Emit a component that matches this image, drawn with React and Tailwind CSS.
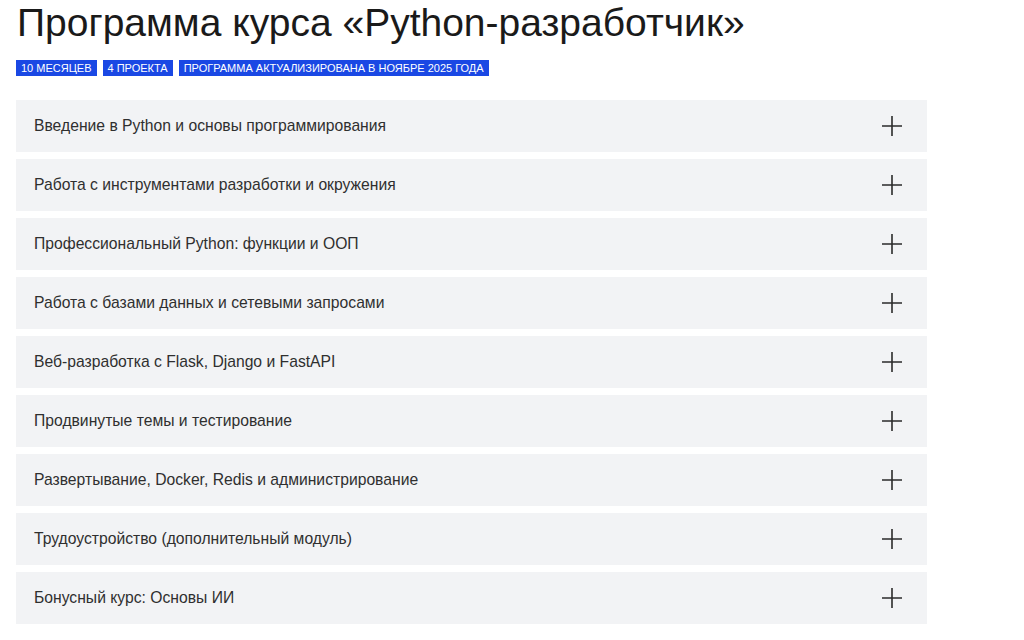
import React from "react";

const modules = [
  "Введение в Python и основы программирования",
  "Работа с инструментами разработки и окружения",
  "Профессиональный Python: функции и ООП",
  "Работа с базами данных и сетевыми запросами",
  "Веб-разработка с Flask, Django и FastAPI",
  "Продвинутые темы и тестирование",
  "Развертывание, Docker, Redis и администрирование",
  "Трудоустройство (дополнительный модуль)",
  "Бонусный курс: Основы ИИ",
];

const tags = ["10 месяцев", "4 проекта", "Программа актуализирована в ноябре 2025 года"];

function PlusIcon() {
  return (
    <svg width="20" height="20" viewBox="0 0 20 20" fill="none">
      <path d="M10 0V20M0 10H20" stroke="#2b2b2b" strokeWidth="1.6" />
    </svg>
  );
}

export default function App() {
  return (
    <div
      className="w-[1024px] h-[640px] bg-white overflow-hidden px-4 pt-[1px]"
      style={{ fontFamily: '"Liberation Sans", Arial, sans-serif' }}
    >
      <h1 className="text-[39px] leading-[44px] text-[#1a1a1a] pl-[1px]">
        Программа курса «Python-разработчик»
      </h1>
      <div className="flex gap-[6px] mt-[15px]">
        {tags.map((t) => (
          <span
            key={t}
            className="h-4 px-[5px] bg-[#1a48e4] text-white text-[11px] leading-4 uppercase"
          >
            {t}
          </span>
        ))}
      </div>
      <div className="mt-6 w-[911px] flex flex-col gap-[7px]">
        {modules.map((m) => (
          <div
            key={m}
            className="h-[52px] bg-[#f2f3f5] flex items-center justify-between pl-[18px] pr-[25px]"
          >
            <span className="text-[15.7px] text-[#2f2f2f]">{m}</span>
            <PlusIcon />
          </div>
        ))}
      </div>
    </div>
  );
}
